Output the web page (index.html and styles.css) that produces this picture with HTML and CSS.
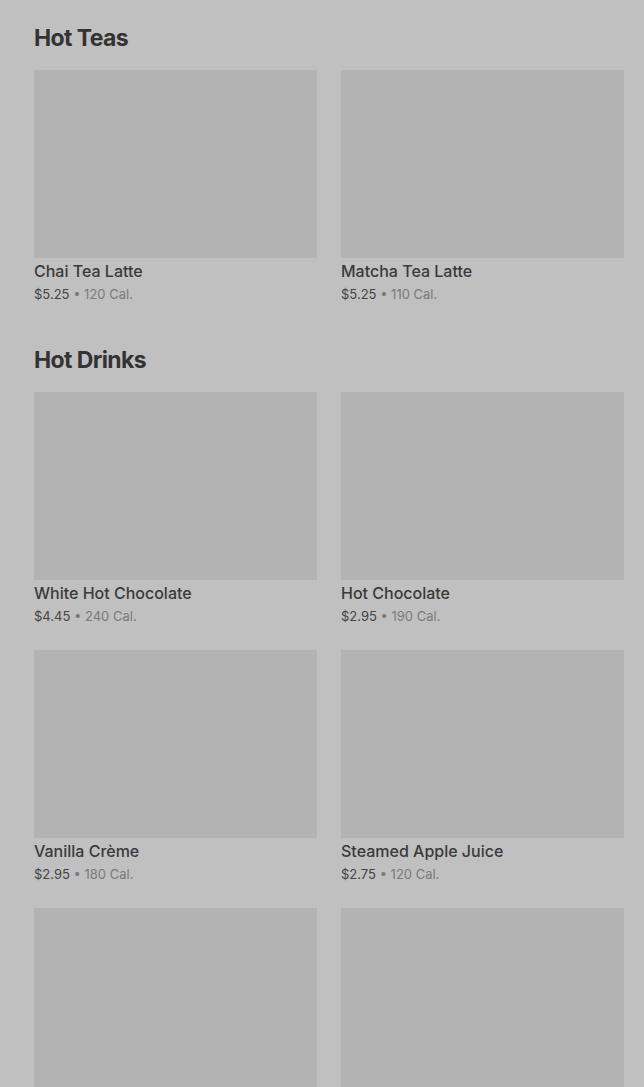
FILE: index.html
```html
<!DOCTYPE html>
<html lang="en">
<head>
  <meta charset="UTF-8">
  <meta name="viewport" content="width=device-width, initial-scale=1.0">
  <title>Menu</title>
  <link rel="stylesheet" href="styles.css">
</head>
<body>
  <main class="menu">
    <section class="menu-section">
      <h2 class="section-title">Hot Teas</h2>
      <div class="item-grid">
        <article class="item">
          <div class="item-image"></div>
          <h3 class="item-name">Chai Tea Latte</h3>
          <p class="item-meta"><span class="price">$5.25</span> <span class="cal">• 120 Cal.</span></p>
        </article>
        <article class="item">
          <div class="item-image"></div>
          <h3 class="item-name">Matcha Tea Latte</h3>
          <p class="item-meta"><span class="price">$5.25</span> <span class="cal">• 110 Cal.</span></p>
        </article>
      </div>
    </section>

    <section class="menu-section">
      <h2 class="section-title">Hot Drinks</h2>
      <div class="item-grid">
        <article class="item">
          <div class="item-image"></div>
          <h3 class="item-name">White Hot Chocolate</h3>
          <p class="item-meta"><span class="price">$4.45</span> <span class="cal">• 240 Cal.</span></p>
        </article>
        <article class="item">
          <div class="item-image"></div>
          <h3 class="item-name">Hot Chocolate</h3>
          <p class="item-meta"><span class="price">$2.95</span> <span class="cal">• 190 Cal.</span></p>
        </article>
        <article class="item">
          <div class="item-image"></div>
          <h3 class="item-name">Vanilla Crème</h3>
          <p class="item-meta"><span class="price">$2.95</span> <span class="cal">• 180 Cal.</span></p>
        </article>
        <article class="item">
          <div class="item-image"></div>
          <h3 class="item-name">Steamed Apple Juice</h3>
          <p class="item-meta"><span class="price">$2.75</span> <span class="cal">• 120 Cal.</span></p>
        </article>
        <article class="item">
          <div class="item-image"></div>
        </article>
        <article class="item">
          <div class="item-image"></div>
        </article>
      </div>
    </section>
  </main>
</body>
</html>
```

FILE: styles.css
```css
/* Page base (dimmed under an overlay) */
body {
  margin: 0;
  background: #c0c0c0;
  font-family: Inter, "Noto Sans", Arial, sans-serif;
  color: #333;
}

.menu {
  padding: 22px 20px 0 34px;
}

.menu-section {
  margin-bottom: 40px;
}

.section-title {
  margin: 0 0 16px;
  font-size: 23px;
  line-height: 32px;
  font-weight: 700;
  letter-spacing: -0.6px;
  color: #333;
}

.item-grid {
  display: grid;
  grid-template-columns: 1fr 1fr;
  column-gap: 24px;
  row-gap: 24px;
}

.item-image {
  height: 188px;
  background: #b3b3b3;
}

.item-name {
  margin: 3px 0 0;
  font-size: 16px;
  line-height: 20px;
  font-weight: 500;
  color: #3a3a3a;
}

.item-meta {
  margin: 3px 0 0;
  font-size: 13px;
  line-height: 20px;
}

.price {
  color: #444;
}

.cal {
  color: #7a7a7a;
}
```
